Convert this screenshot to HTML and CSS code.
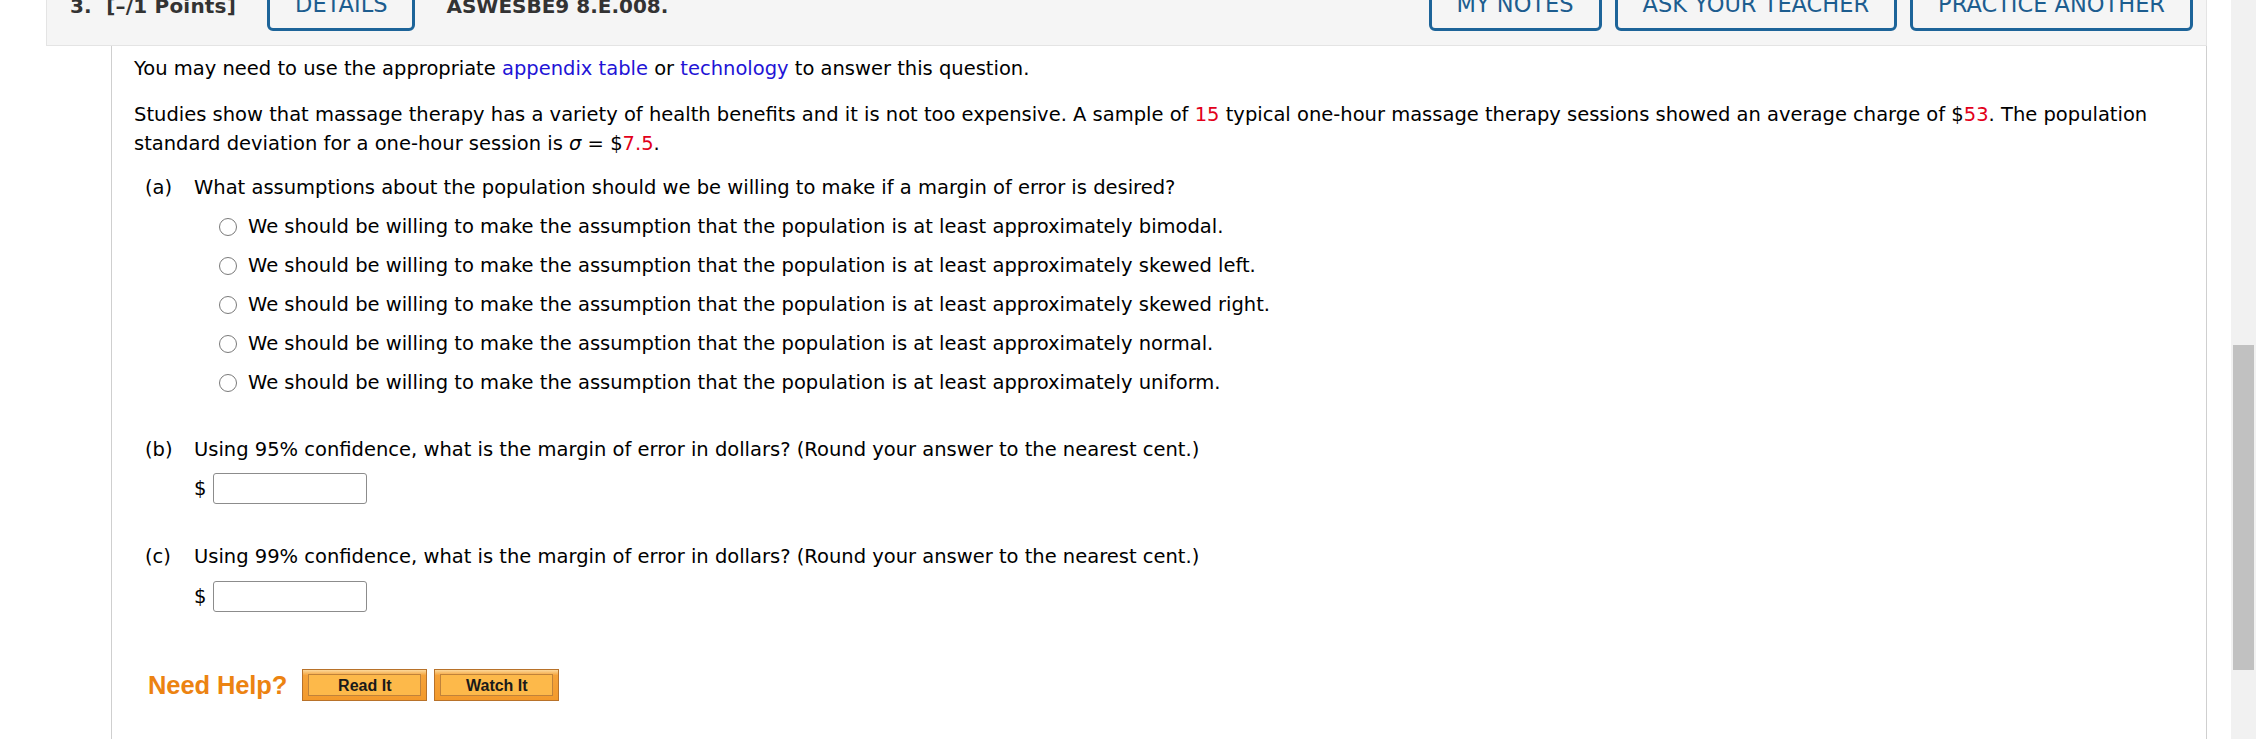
FILE: index.html
```html
<!DOCTYPE html>
<html>
<head>
<meta charset="utf-8">
<link rel="stylesheet" href="styles.css">
</head>
<body>
<div class="window">
  <div class="page">
    <div class="header">
      <div class="hgroup">
        <span class="points">3.&nbsp; [–/1 Points]</span>
        <span class="hbtn">DETAILS</span>
        <span class="code">ASWESBE9 8.E.008.</span>
      </div>
      <div class="hgroup right">
        <span class="hbtn">MY NOTES</span>
        <span class="hbtn">ASK YOUR TEACHER</span>
        <span class="hbtn">PRACTICE ANOTHER</span>
      </div>
    </div>
    <div class="panel">
      <p class="line first">You may need to use the appropriate <a class="link">appendix table</a> or <a class="link">technology</a> to answer this question.</p>
      <p class="line intro">Studies show that massage therapy has a variety of health benefits and it is not too expensive. A sample of <span class="red">15</span> typical one-hour massage therapy sessions showed an average charge of $<span class="red">53</span>. The population standard deviation for a one-hour session is <i>σ</i> = $<span class="red">7.5</span>.</p>

      <div class="part qa">
        <span class="plabel">(a)</span>
        <span>What assumptions about the population should we be willing to make if a margin of error is desired?</span>
      </div>
      <div class="options">
        <label class="opt"><span class="radio"></span>We should be willing to make the assumption that the population is at least approximately bimodal.</label>
        <label class="opt"><span class="radio"></span>We should be willing to make the assumption that the population is at least approximately skewed left.</label>
        <label class="opt"><span class="radio"></span>We should be willing to make the assumption that the population is at least approximately skewed right.</label>
        <label class="opt"><span class="radio"></span>We should be willing to make the assumption that the population is at least approximately normal.</label>
        <label class="opt"><span class="radio"></span>We should be willing to make the assumption that the population is at least approximately uniform.</label>
      </div>

      <div class="part qb">
        <span class="plabel">(b)</span>
        <span>Using 95% confidence, what is the margin of error in dollars? (Round your answer to the nearest cent.)</span>
      </div>
      <div class="answer ab"><span class="dollar">$</span><span class="box"></span></div>

      <div class="part qc">
        <span class="plabel">(c)</span>
        <span>Using 99% confidence, what is the margin of error in dollars? (Round your answer to the nearest cent.)</span>
      </div>
      <div class="answer ac"><span class="dollar">$</span><span class="box"></span></div>

      <div class="help">
        <span class="needhelp">Need Help?</span>
        <span class="obtn"><span class="obtn-in">Read It</span></span>
        <span class="obtn"><span class="obtn-in">Watch It</span></span>
      </div>
    </div>
  </div>
  <div class="scrollbar"><div class="thumb"></div></div>
</div>
</body>
</html>
```
FILE: styles.css
```css
html, body {
  margin: 0;
  padding: 0;
  background: #fff;
}
body {
  font-family: "DejaVu Sans", Verdana, sans-serif;
  color: #000;
  overflow: hidden;
}
.window {
  display: flex;
  width: 2256px;
  height: 739px;
  overflow: hidden;
}
.page {
  flex: 1;
  display: flex;
  flex-direction: column;
  min-width: 0;
}
.header {
  margin-left: 46px;
  margin-right: 24px;
  height: 45px;
  background: #f5f5f5;
  border: 1px solid #e4e4e4;
  border-top: none;
  display: flex;
  justify-content: space-between;
  align-items: flex-start;
  overflow: hidden;
  flex-shrink: 0;
}
.hgroup {
  display: flex;
  align-items: flex-start;
  gap: 31px;
  padding-left: 23px;
}
.hgroup.right {
  gap: 13px;
  padding-left: 0;
  padding-right: 13px;
}
.points, .code {
  font-weight: bold;
  font-size: 20px;
  line-height: 20px;
  color: #333;
  margin-top: -4px;
}
.points { letter-spacing: 0.2px; }
.hbtn {
  box-sizing: border-box;
  height: 50px;
  margin-top: -19px;
  border: 3px solid #1d6499;
  border-radius: 6px;
  padding: 0 25px 4px;
  display: flex;
  align-items: center;
  font-size: 22.5px;
  color: #1d5d8f;
  white-space: nowrap;
}
.panel {
  flex: 1;
  margin-left: 111px;
  margin-right: 24px;
  border-left: 1px solid #cfcfcf;
  border-right: 1px solid #cfcfcf;
  padding: 8px 0 0 22px;
  font-size: 19.5px;
  line-height: 29px;
}
.line { margin: 0; }
.intro { margin-top: 17px; padding-right: 20px; }
.link { color: #2213d6; }
.red { color: #e2001a; }
.part {
  display: flex;
  padding-left: 11px;
}
.plabel { width: 49px; flex-shrink: 0; }
.qa { margin-top: 15px; }
.options {
  margin-top: 5px;
  margin-left: 85px;
  display: flex;
  flex-direction: column;
}
.opt {
  height: 39px;
  display: flex;
  align-items: center;
}
.radio {
  box-sizing: border-box;
  width: 18px;
  height: 18px;
  border: 1.5px solid #7a7a7a;
  border-radius: 50%;
  margin-right: 11px;
  background: #fff;
  flex-shrink: 0;
}
.qb { margin-top: 33px; }
.qc { margin-top: 38px; }
.answer {
  display: flex;
  align-items: center;
  margin-left: 60px;
  height: 31px;
}
.ab { margin-top: 9px; }
.ac { margin-top: 10px; }
.dollar { width: 19px; }
.box {
  box-sizing: border-box;
  width: 154px;
  height: 31px;
  border: 1px solid #8c8c8c;
  border-radius: 3px;
  background: #fff;
}
.help {
  margin-top: 57px;
  margin-left: 14px;
  display: flex;
  align-items: center;
  height: 32px;
}
.needhelp {
  font-family: "Liberation Sans", Arial, sans-serif;
  font-weight: bold;
  font-size: 25.5px;
  color: #ec8311;
  margin-right: 15px;
  letter-spacing: -0.1px;
}
.obtn {
  box-sizing: border-box;
  width: 125px;
  height: 32px;
  border: 1px solid #b8722a;
  background: linear-gradient(#fcd89a 0%, #f5a33a 18%, #f39a2c 100%);
  padding: 4px 5px;
  margin-right: 7px;
  display: flex;
  flex-shrink: 0;
}
.obtn-in {
  flex: 1;
  border: 1px solid #c0823a;
  background: #fdb94a;
  display: flex;
  align-items: center;
  justify-content: center;
  font-family: "Liberation Sans", Arial, sans-serif;
  font-weight: bold;
  font-size: 16px;
  color: #1a1a1a;
}
.scrollbar {
  width: 25px;
  flex-shrink: 0;
  background: #f1f1f1;
  display: flex;
  flex-direction: column;
}
.thumb {
  margin: 345px 2px 0;
  height: 325px;
  background: #c1c1c1;
}
```
